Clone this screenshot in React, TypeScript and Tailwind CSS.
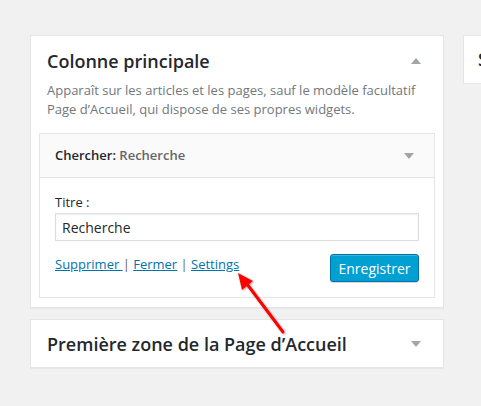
import React from 'react';

const Toggle = ({ up }: { up?: boolean }) => (
    <svg width="10" height="6" viewBox="0 0 10 6" className="shrink-0">
        {up ? <path d="M0 6 L5 0 L10 6 Z" fill="#a0a5aa" /> : <path d="M0 0 L10 0 L5 6 Z" fill="#a0a5aa" />}
    </svg>
);

const Arrow = () => (
    <svg className="absolute left-0 top-0 pointer-events-none" width="481" height="406" viewBox="0 0 481 406">
        <defs>
            <filter id="sh" x="-50%" y="-50%" width="200%" height="200%">
                <feDropShadow dx="1" dy="1" stdDeviation="1.2" floodColor="#000" floodOpacity="0.35" />
            </filter>
        </defs>
        <g filter="url(#sh)">
            <line x1="283" y1="332" x2="247" y2="284" stroke="#f00" strokeWidth="3" strokeLinecap="round" />
            <path d="M238 273 L253 281 L242 290 Z" fill="#f00" />
        </g>
    </svg>
);

export default function App() {
    return (
        <div
            className="relative w-[481px] h-[406px] overflow-hidden bg-[#f1f1f1] text-[#23282d]"
            style={{ fontFamily: '"Open Sans", "Noto Sans", sans-serif' }}
        >
            <div className="flex flex-row items-start gap-[19px] pt-[35px] pl-[30px]">
                <div className="flex flex-col gap-[11px] w-[414px] shrink-0">
                    {/* Colonne principale */}
                    <div className="bg-white border border-[#e5e5e5] shadow-[0_1px_1px_rgba(0,0,0,0.04)] pb-[9px]">
                        <div className="flex flex-row items-center justify-between pl-[16px] pr-[22px] pt-[12px]">
                            <h2 className="text-[18px] leading-[26px] font-semibold">Colonne principale</h2>
                            <Toggle up />
                        </div>
                        <p className="px-[16px] pt-[7px] text-[13px] leading-[19px] text-[#72777c]">
                            Apparaît sur les articles et les pages, sauf le modèle facultatif Page d’Accueil, qui dispose de ses propres widgets.
                        </p>
                        <div className="mx-[8px] mt-[14px] border border-[#e5e5e5] bg-white">
                            <div className="flex flex-row items-center justify-between h-[44px] bg-[#fafafa] border-b border-[#e5e5e5] pl-[15px] pr-[20px]">
                                <h3 className="text-[13px] font-semibold">
                                    Chercher: <span className="text-[#666]">Recherche</span>
                                </h3>
                                <Toggle />
                            </div>
                            <div className="px-[15px] pt-[14px] pb-[15px]">
                                <label className="block text-[13px] leading-[20px]">Titre :</label>
                                <div className="mt-[1px] h-[28px] border border-[#ddd] shadow-[inset_0_1px_2px_rgba(0,0,0,0.07)] flex items-center px-[6px] text-[14px]">
                                    Recherche
                                </div>
                                <div className="flex flex-row items-center justify-between mt-[13px]">
                                    <div className="text-[13px] text-[#666] leading-[20px] pb-[8px]">
                                        <a className="text-[#0073aa] underline">Supprimer </a>
                                        {' | '}
                                        <a className="text-[#0073aa] underline">Fermer</a>
                                        {' | '}
                                        <a className="text-[#0073aa] underline">Settings</a>
                                    </div>
                                    <button className="h-[28px] w-[89px] rounded-[3px] bg-[#00a0d2] border border-[#0073aa] shadow-[inset_0_1px_0_rgba(120,200,230,0.5),0_1px_0_rgba(0,0,0,0.15)] text-white text-[14px]">
                                        Enregistrer
                                    </button>
                                </div>
                            </div>
                        </div>
                    </div>
                    {/* Première zone */}
                    <div className="bg-white border border-[#e5e5e5] shadow-[0_1px_1px_rgba(0,0,0,0.04)] h-[49px] flex flex-row items-center justify-between pl-[16px] pr-[22px]">
                        <h2 className="text-[18px] leading-[26px] font-semibold">Première zone de la Page d’Accueil</h2>
                        <Toggle />
                    </div>
                </div>
                {/* Sidebar panel, cut off at the window edge */}
                <div className="bg-white border border-[#e5e5e5] h-[49px] w-[200px] shrink-0 flex items-center pl-[14px]">
                    <h2 className="text-[18px] font-semibold whitespace-nowrap">Sidebar</h2>
                </div>
            </div>
            <Arrow />
        </div>
    );
}
